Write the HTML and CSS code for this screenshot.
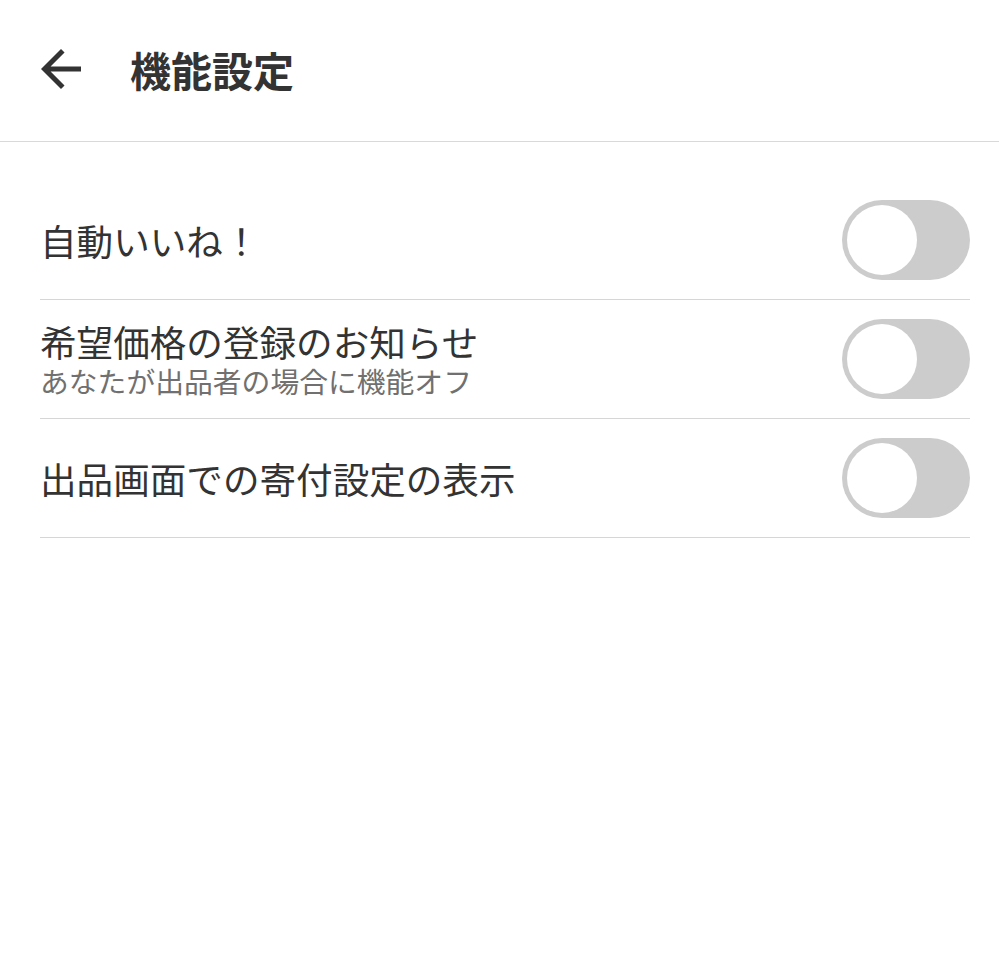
FILE: index.html
```html
<!DOCTYPE html>
<html lang="ja">
<head>
    <meta charset="UTF-8">
    <title>機能設定</title>
    <link rel="stylesheet" href="styles.css">
</head>
<body>
    <div class="header">
        <svg class="back" viewBox="0 0 24 24" width="60" height="60">
            <path d="M20 11H7.83l5.59-5.59L12 4l-8 8 8 8 1.41-1.41L7.83 13H20v-2z" fill="#333"/>
        </svg>
        <div class="title">機能設定</div>
    </div>
    <div class="list">
        <div class="row">
            <div class="label">
                <div class="main">自動いいね！</div>
            </div>
            <div class="toggle"><div class="knob"></div></div>
        </div>
        <div class="row">
            <div class="label">
                <div class="main">希望価格の登録のお知らせ</div>
                <div class="sub">あなたが出品者の場合に機能オフ</div>
            </div>
            <div class="toggle"><div class="knob"></div></div>
        </div>
        <div class="row">
            <div class="label">
                <div class="main">出品画面での寄付設定の表示</div>
            </div>
            <div class="toggle"><div class="knob"></div></div>
        </div>
    </div>
</body>
</html>
```

FILE: styles.css
```css
*{
    margin: 0;
    padding: 0;
    box-sizing: border-box;
}
body{
    font-family: "Noto Sans CJK JP", "Noto Sans", sans-serif;
    background-color: #fff;
    color: #333;
}
.header{
    height: 142px;
    border-bottom: 1px solid #d9d9d9;
    display: flex;
    align-items: center;
    padding-left: 31px;
    padding-bottom: 4px;
}
.header .back{
    display: block;
}
.header .title{
    margin-left: 39px;
    font-size: 41px;
    font-weight: bold;
    color: #333;
}
.list{
    padding: 39px 29px 0 40px;
}
.row{
    height: 119px;
    border-bottom: 1px solid #d6d6d6;
    display: flex;
    align-items: center;
    justify-content: space-between;
}
.label .main{
    font-size: 36.6px;
    line-height: 43px;
    color: #333;
}
.label .sub{
    font-size: 28.8px;
    line-height: 36px;
    color: #707070;
}
.toggle{
    width: 128px;
    height: 80px;
    border-radius: 40px;
    background-color: #cccccc;
    padding: 5px;
}
.toggle .knob{
    width: 70px;
    height: 70px;
    border-radius: 50%;
    background-color: #fff;
}
```
